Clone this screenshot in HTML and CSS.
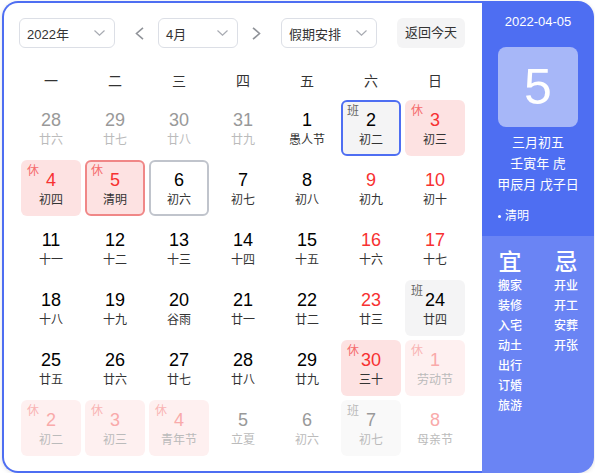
FILE: index.html
```html
<!DOCTYPE html>
<html lang="zh-CN">
<head>
<meta charset="utf-8">
<title>万年历</title>
<link rel="stylesheet" href="styles.css">
</head>
<body>
<div class="calendar">
  <div class="main">
    <div class="toolbar">
      <div class="select sel-year"><span>2022年</span><svg class="chev" width="11" height="6" viewBox="0 0 11 6"><polyline points="0.5,0.5 5.5,5.2 10.5,0.5" fill="none" stroke="#a8abb2" stroke-width="1.2"/></svg></div>
      <div class="arrow arrow-prev"><svg width="9" height="13" viewBox="0 0 9 13"><polyline points="8,0.8 1.5,6.5 8,12.2" fill="none" stroke="#909399" stroke-width="1.6"/></svg></div>
      <div class="select sel-month"><span>4月</span><svg class="chev" width="11" height="6" viewBox="0 0 11 6"><polyline points="0.5,0.5 5.5,5.2 10.5,0.5" fill="none" stroke="#a8abb2" stroke-width="1.2"/></svg></div>
      <div class="arrow arrow-next"><svg width="9" height="13" viewBox="0 0 9 13"><polyline points="1,0.8 7.5,6.5 1,12.2" fill="none" stroke="#909399" stroke-width="1.6"/></svg></div>
      <div class="select sel-holiday"><span>假期安排</span><svg class="chev" width="11" height="6" viewBox="0 0 11 6"><polyline points="0.5,0.5 5.5,5.2 10.5,0.5" fill="none" stroke="#a8abb2" stroke-width="1.2"/></svg></div>
      <div class="btn-today">返回今天</div>
    </div>
    <div class="weekdays">
      <div>一</div><div>二</div><div>三</div><div>四</div><div>五</div><div>六</div><div>日</div>
    </div>
    <div class="days">
      <div class="cell other"><div class="num">28</div><div class="lunar">廿六</div></div>
      <div class="cell other"><div class="num">29</div><div class="lunar">廿七</div></div>
      <div class="cell other"><div class="num">30</div><div class="lunar">廿八</div></div>
      <div class="cell other"><div class="num">31</div><div class="lunar">廿九</div></div>
      <div class="cell"><div class="num">1</div><div class="lunar">愚人节</div></div>
      <div class="cell work today"><span class="badge">班</span><div class="num">2</div><div class="lunar">初二</div></div>
      <div class="cell rest"><span class="badge">休</span><div class="num">3</div><div class="lunar">初三</div></div>

      <div class="cell rest"><span class="badge">休</span><div class="num">4</div><div class="lunar">初四</div></div>
      <div class="cell rest selected"><span class="badge">休</span><div class="num">5</div><div class="lunar">清明</div></div>
      <div class="cell hover"><div class="num">6</div><div class="lunar">初六</div></div>
      <div class="cell"><div class="num">7</div><div class="lunar">初七</div></div>
      <div class="cell"><div class="num">8</div><div class="lunar">初八</div></div>
      <div class="cell weekend"><div class="num">9</div><div class="lunar">初九</div></div>
      <div class="cell weekend"><div class="num">10</div><div class="lunar">初十</div></div>

      <div class="cell"><div class="num">11</div><div class="lunar">十一</div></div>
      <div class="cell"><div class="num">12</div><div class="lunar">十二</div></div>
      <div class="cell"><div class="num">13</div><div class="lunar">十三</div></div>
      <div class="cell"><div class="num">14</div><div class="lunar">十四</div></div>
      <div class="cell"><div class="num">15</div><div class="lunar">十五</div></div>
      <div class="cell weekend"><div class="num">16</div><div class="lunar">十六</div></div>
      <div class="cell weekend"><div class="num">17</div><div class="lunar">十七</div></div>

      <div class="cell"><div class="num">18</div><div class="lunar">十八</div></div>
      <div class="cell"><div class="num">19</div><div class="lunar">十九</div></div>
      <div class="cell"><div class="num">20</div><div class="lunar">谷雨</div></div>
      <div class="cell"><div class="num">21</div><div class="lunar">廿一</div></div>
      <div class="cell"><div class="num">22</div><div class="lunar">廿二</div></div>
      <div class="cell weekend"><div class="num">23</div><div class="lunar">廿三</div></div>
      <div class="cell work"><span class="badge">班</span><div class="num">24</div><div class="lunar">廿四</div></div>

      <div class="cell"><div class="num">25</div><div class="lunar">廿五</div></div>
      <div class="cell"><div class="num">26</div><div class="lunar">廿六</div></div>
      <div class="cell"><div class="num">27</div><div class="lunar">廿七</div></div>
      <div class="cell"><div class="num">28</div><div class="lunar">廿八</div></div>
      <div class="cell"><div class="num">29</div><div class="lunar">廿九</div></div>
      <div class="cell rest"><span class="badge">休</span><div class="num">30</div><div class="lunar">三十</div></div>
      <div class="cell other rest"><span class="badge">休</span><div class="num">1</div><div class="lunar">劳动节</div></div>

      <div class="cell other rest"><span class="badge">休</span><div class="num">2</div><div class="lunar">初二</div></div>
      <div class="cell other rest"><span class="badge">休</span><div class="num">3</div><div class="lunar">初三</div></div>
      <div class="cell other rest"><span class="badge">休</span><div class="num">4</div><div class="lunar">青年节</div></div>
      <div class="cell other"><div class="num">5</div><div class="lunar">立夏</div></div>
      <div class="cell other"><div class="num">6</div><div class="lunar">初六</div></div>
      <div class="cell other work"><span class="badge">班</span><div class="num">7</div><div class="lunar">初七</div></div>
      <div class="cell other weekend"><div class="num">8</div><div class="lunar">母亲节</div></div>
    </div>
  </div>
  <div class="side">
    <div class="side-top">
      <div class="side-date">2022-04-05</div>
      <div class="big-day">5</div>
      <div class="info">
        <div>三月初五</div>
        <div>壬寅年 虎</div>
        <div>甲辰月 戊子日</div>
      </div>
      <div class="festival"><span class="dot"></span>清明</div>
    </div>
    <div class="side-bottom">
      <div class="yiji">
        <div class="col">
          <div class="yj-title">宜</div>
          <div>搬家</div><div>装修</div><div>入宅</div><div>动土</div><div>出行</div><div>订婚</div><div>旅游</div>
        </div>
        <div class="col">
          <div class="yj-title">忌</div>
          <div>开业</div><div>开工</div><div>安葬</div><div>开张</div>
        </div>
      </div>
    </div>
  </div>
</div>
</body>
</html>
```

FILE: styles.css
```css
* { box-sizing: border-box; }
html, body { margin: 0; padding: 0; background: #fff; }
body {
  font-family: "Liberation Sans", "Noto Sans CJK SC", sans-serif;
  color: #333;
}
.calendar {
  display: flex;
  margin: 1px 0 0 2px;
  width: 592px;
  height: 472px;
  border-radius: 16px;
  box-shadow: 0 1px 4px rgba(0,0,0,0.12);
}
.main {
  width: 480px;
  height: 472px;
  border: 2px solid #4e6ef2;
  border-right: none;
  border-radius: 16px 0 0 16px;
  background: #fff;
  padding-top: 15px;
}
.toolbar {
  display: flex;
  align-items: center;
  margin-left: 15px;
  height: 30px;
  font-size: 13px;
}
.select {
  height: 30px;
  border: 1px solid #dcdfe6;
  border-radius: 6px;
  display: flex;
  align-items: center;
  justify-content: space-between;
  padding: 0 9px 0 7px;
  color: #333;
}
.sel-year { width: 96px; }
.sel-month { width: 80px; margin-left: 14px; }
.sel-holiday { width: 96px; margin-left: 20px; padding-left: 7px; }
.chev { display: block; }
.arrow { width: 9px; height: 13px; display: flex; }
.arrow svg { display: block; }
.arrow-prev { margin-left: 20px; }
.arrow-next { margin-left: 14px; }
.btn-today {
  margin-left: 20px;
  width: 68px;
  height: 30px;
  line-height: 30px;
  text-align: center;
  background: #f4f4f5;
  border-radius: 6px;
  color: #333;
}
.weekdays {
  display: grid;
  grid-template-columns: repeat(7, 60px);
  column-gap: 4px;
  margin: 23px 0 0 17px;
  font-size: 14px;
  line-height: 20px;
  text-align: center;
  color: #333;
}
.days {
  display: grid;
  grid-template-columns: repeat(7, 60px);
  grid-auto-rows: 56px;
  gap: 4px;
  margin: 9px 0 0 17px;
}
.cell {
  position: relative;
  border-radius: 6px;
  text-align: center;
  padding-top: 9px;
}
.num {
  font-size: 18px;
  line-height: 22px;
  color: #000;
}
.lunar {
  font-size: 12px;
  line-height: 18px;
  color: #333;
}
.badge {
  position: absolute;
  top: 4px;
  left: 6px;
  font-size: 12px;
  line-height: 14px;
}
.rest { background: #fde2e2; }
.rest .num { color: #f73131; }
.rest .badge { color: #f56c6c; }
.work { background: #f4f4f5; }
.work .badge { color: #666; }
.weekend .num { color: #f73131; }
.today { border: 2px solid #4e6ef2; padding-top: 7px; }
.today .badge { top: 2px; left: 4px; }
.selected { border: 2px solid #f08787; padding-top: 7px; }
.selected .badge { top: 2px; left: 4px; }
.hover { border: 2px solid #c0c4cc; padding-top: 7px; }
.other .num { color: #999; }
.other .lunar { color: #bbb; }
.other.rest { background: #fef0f0; }
.other.rest .num { color: #f9aaaa; }
.other.rest .badge { color: #f9b4b4; }
.other.work { background: #f9f9f9; }
.other.work .badge { color: #bbb; }
.other.weekend .num { color: #f9aaaa; }

.side {
  width: 112px;
  height: 472px;
  border-radius: 0 16px 16px 0;
  overflow: hidden;
  display: flex;
  flex-direction: column;
  color: #fff;
}
.side-top {
  height: 235px;
  background: #4e6ef2;
  padding: 11px 0 0 16px;
}
.side-date {
  font-size: 13px;
  line-height: 20px;
  text-align: center;
  margin-left: -16px;
}
.big-day {
  width: 80px;
  height: 80px;
  margin-top: 15px;
  border-radius: 8px;
  background: #a7b7f8;
  font-size: 50px;
  display: flex;
  align-items: center;
  justify-content: center;
}
.info {
  margin-top: 5px;
  margin-left: -16px;
  font-size: 13px;
  line-height: 21px;
  text-align: center;
}
.festival {
  margin-top: 11px;
  font-size: 12px;
  line-height: 20px;
  display: flex;
  align-items: center;
}
.dot {
  width: 3px;
  height: 3px;
  border-radius: 50%;
  background: #fff;
  margin-right: 4px;
}
.side-bottom {
  flex: 1;
  background: #6a84f4;
  padding: 13px 0 0 16px;
}
.yiji { display: flex; gap: 32px; }
.col {
  width: 24px;
  font-size: 12px;
  line-height: 20px;
  font-weight: 500;
  text-align: center;
}
.yj-title {
  font-size: 23px;
  line-height: 26px;
  margin-bottom: 1px;
}
```
